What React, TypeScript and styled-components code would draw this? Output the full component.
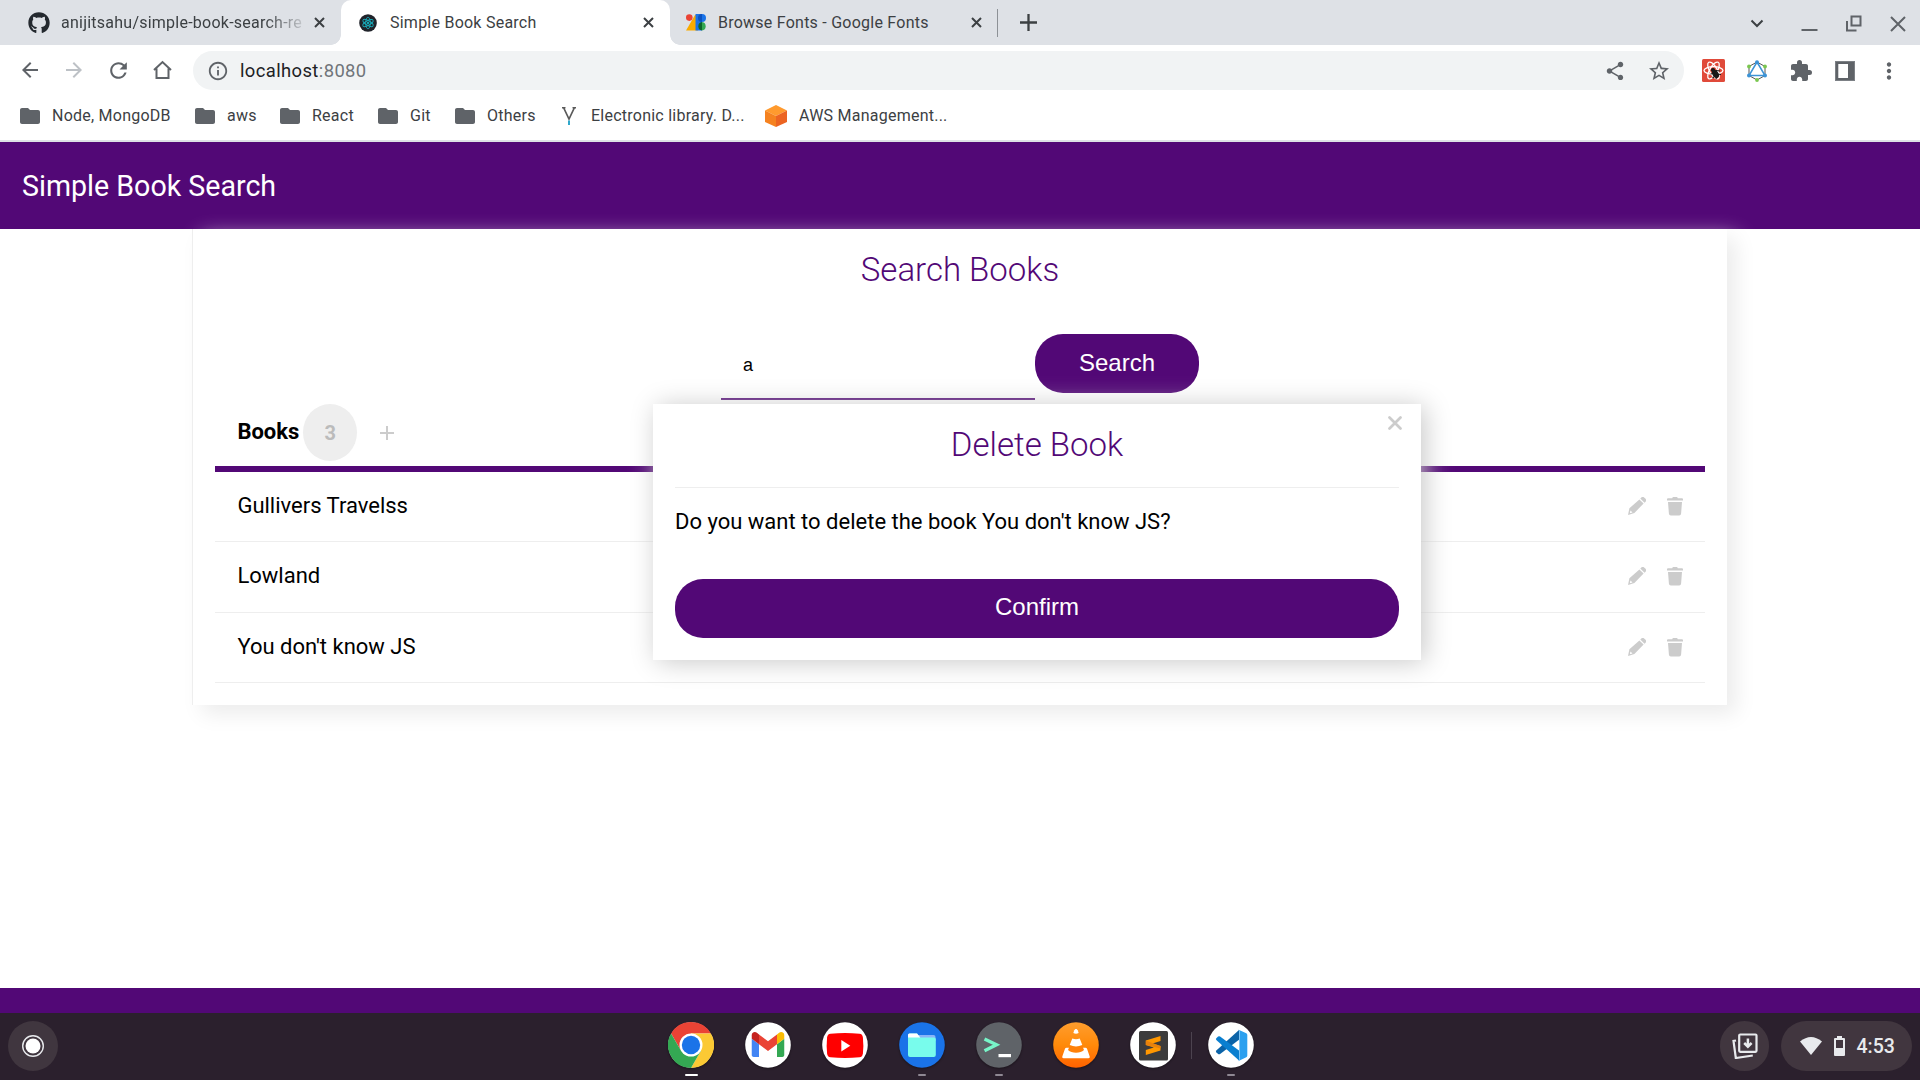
import React from "react";
import styled, { createGlobalStyle } from "styled-components";
import { FaGithub } from "react-icons/fa";
import {
  MdArrowBack, MdArrowForward, MdRefresh, MdInfoOutline, MdShare,
  MdStarBorder, MdExtension, MdMoreVert, MdFolder,
} from "react-icons/md";

const purple = "#520876";

const Global = createGlobalStyle`
  * { box-sizing: border-box; }
  html, body { margin: 0; padding: 0; background: #fff; overflow: hidden; }
  body { font-family: Roboto, sans-serif; color: #000; }
  button, input { font-family: "Liberation Sans", Arial, sans-serif; }
  svg { display: block; flex: none; }
`;

const Screen = styled.div`
  width: 1920px; height: 1080px; display: flex; flex-direction: column; overflow: hidden; background: #fff;
`;

/* Browser frame */
const TabStrip = styled.div`
  height: 45px; flex: none; background: #dee1e6; display: flex; color: #3c4043;
`;
const Tab = styled.div<{ $w: number; $left: number; $right: number; $gap: number; $active?: boolean }>`
  width: ${p => p.$w}px; height: 45px; flex: none; display: flex; align-items: center; position: relative;
  padding: 0 ${p => p.$right}px 0 ${p => p.$left}px; gap: ${p => p.$gap}px;
  font-size: 16px; letter-spacing: 0.24px;
  background: ${p => (p.$active ? "#fff" : "transparent")};
  border-radius: ${p => (p.$active ? "10px 10px 0 0" : "0")};
  ${p => p.$active && `
    &::before, &::after { content: ""; position: absolute; bottom: 0; width: 10px; height: 10px; }
    &::before { left: -10px; background: radial-gradient(circle at 0 0, transparent 9.5px, #fff 10px); }
    &::after { right: -10px; background: radial-gradient(circle at 100% 0, transparent 9.5px, #fff 10px); }
  `}
`;
const TabTitle = styled.span<{ $fade?: boolean }>`
  flex: 1; min-width: 0; white-space: nowrap; line-height: 24px;
  ${p => p.$fade && "mask-image: linear-gradient(90deg, #000 84%, transparent 103%);"}
`;
const TabDivider = styled.div`
  width: 1px; height: 28px; margin: 9px 0 0 7px; background: #8d9196; flex: none;
`;
const NewTab = styled.div`
  width: 60px; height: 45px; display: grid; place-items: center;
`;
const WindowControls = styled.div`
  margin-left: auto; display: flex; align-items: center; gap: 23px; padding-right: 11px; color: #5f6368;
  > svg:first-child { margin-right: 6px; }
`;
const Toolbar = styled.div`
  height: 51px; flex: none; display: flex; align-items: center; color: #5f6368;
`;
const NavButtons = styled.div`
  width: 193px; padding-left: 18px; display: flex; gap: 20px; flex: none;
`;
const Omnibox = styled.div`
  width: 1491px; height: 39px; border-radius: 20px; background: #f1f3f4; display: flex; align-items: center;
  padding: 0 13px 0 14px; font-size: 18.4px; letter-spacing: 0.4px; color: #202124;
`;
const Address = styled.span`
  margin-left: 11px; flex: 1; line-height: 28px;
  span { color: #70757a; }
`;
const OmniActions = styled.div`display: flex; align-items: center; gap: 21px;`;
const Extensions = styled.div`
  display: grid; grid-template-columns: repeat(5, 44px); place-items: center; padding-left: 7px;
`;
const BookmarkBar = styled.div`
  height: 46px; flex: none; display: flex; align-items: flex-start; padding: 7px 0 0 20px; border-bottom: 2px solid #dee1e6;
  color: #3c4043;
`;
const Bookmark = styled.div<{ $w: number; $icon: number }>`
  width: ${p => p.$w}px; height: 25px; display: grid; grid-template-columns: ${p => p.$icon}px 1fr; column-gap: 12px;
  align-items: center; font-size: 16px; letter-spacing: 0.24px; line-height: 24px; white-space: nowrap;
  > svg { justify-self: center; }
  > span { padding-top: 1px; }
`;

/* Book search page */
const Page = styled.div`
  flex: 1; position: relative; display: flex; flex-direction: column; background: #fff;
`;
const Header = styled.header`
  height: 87px; flex: none; background: ${purple}; color: #fff; padding: 25px 22px 0; font-size: 28.6px; line-height: 38px;
`;
const Card = styled.main`
  position: relative; width: 1534px; height: 476px; margin-left: 193px; padding: 21px 22px 0; background: #fff;
  box-shadow: -1px 0 0 #eee, 9px 9px 20px #ececec; display: flex; flex-direction: column;
`;
const Title = styled.h1`
  margin: 0; font-weight: 300; font-size: 33px; line-height: 40px; color: ${purple}; text-align: center;
`;
const SearchForm = styled.form`
  display: flex; margin: 44px 0 0 506px; align-items: flex-start;
`;
const SearchInput = styled.input`
  width: 314px; height: 66px; border: 0; border-bottom: 2px solid ${purple}; outline: 0; background: transparent;
  padding: 0 22px 2px; font-size: 18px; color: #000;
`;
const PrimaryButton = styled.button<{ $w: string; $lift: number }>`
  width: ${p => p.$w}; height: 59px; border: 0; border-radius: 28px; background: ${purple}; color: #fff; font-size: 24px;
  padding: 0 0 ${p => p.$lift}px;
`;
const ListHead = styled.div`
  height: 72px; padding: 4px 22px 5px; display: flex; align-items: center; border-bottom: 6px solid ${purple};
  font-size: 22px; font-weight: 700;
`;
const ListName = styled.span`padding: 0 0 2px 0.4px;`;
const Count = styled.span`
  width: 54px; height: 57px; margin: 0 23px 0 4px; border-radius: 50%; background: #eee; color: #bbb; font-size: 20px; display: grid; place-items: center;
`;
const Row = styled.div<{ $h: number }>`
  height: ${p => p.$h}px; padding: 0 22px 0 22.4px; display: flex; align-items: center; border-bottom: 1px solid #eee; font-size: 22px;
  line-height: 30px;
  > span { padding-bottom: 2px; }
`;
const RowActions = styled.div`
  margin-left: auto; display: flex; gap: 21px; padding-bottom: 1px;
`;
const Modal = styled.section`
  position: absolute; left: 653px; top: 262px; width: 768px; height: 256px; padding: 21px 22px 22px; background: #fff;
  box-shadow: 4px 2px 25px #c8c8c8; display: flex; flex-direction: column;
`;
const ModalHead = styled.div`
  height: 63px; border-bottom: 1px solid #eee;
`;
const ModalText = styled.p`
  margin: 18px 0 42px; font-size: 22px; line-height: 31px;
`;
const CloseIcon = styled.svg`
  position: absolute; right: 19px; top: 12px; width: 14px; height: 14px;
`;
const Footer = styled.footer`
  height: 25px; margin-top: auto; background: ${purple};
`;

/* Shelf */
const Shelf = styled.div`
  height: 67px; flex: none; background: #2b202d; display: grid; grid-template-columns: 668px 1fr 208px; align-items: start; color: #e8eaed;
`;
const Launcher = styled.div`
  width: 50px; height: 50px; margin: 8px 0 0 8px; border-radius: 50%; background: #40363f; display: grid; place-items: center;
`;
const Apps = styled.div`
  display: flex; gap: 31px; padding-top: 9px;
`;
const ShelfApp = styled.div`
  width: 46px; display: flex; flex-direction: column; align-items: center; gap: 6px;
  > svg { filter: drop-shadow(0 1px 1px rgba(0,0,0,.4)); }
`;
const Indicator = styled.i<{ $on?: boolean }>`
  width: ${p => (p.$on ? 13 : 8)}px; height: 2px; border-radius: 1px; background: ${p => (p.$on ? "#fff" : "#8f8893")};
`;
const ShelfDivider = styled.div`
  width: 1px; height: 27px; margin: 10px -15px 0 -16px; background: #4c434f;
`;
const Status = styled.div`
  display: flex; gap: 12px; padding: 8px 8px 0 8px;
`;
const Tote = styled.div`
  width: 49px; height: 50px; border-radius: 25px; background: #41363f; display: grid; place-items: center;
`;
const Tray = styled.div`
  width: 131px; height: 50px; border-radius: 25px; background: #41363f; display: flex; align-items: center; gap: 12px; padding-left: 18.500px;
  font-size: 19.5px; font-weight: 500; white-space: nowrap;
`;

const TabClose = () => (
  <svg width="11" height="11" viewBox="0 0 11 11"><path d="M1 1L10 10M10 1L1 10" stroke="#3c4043" strokeWidth="2" /></svg>
);
const HomeIcon = () => (
  <svg width="23" height="24" viewBox="0 0 23 24"><path d="M3 12L11.500 4l8.500 8M5.500 10.500V20h12V10.500" fill="none" stroke="#5f6368" strokeWidth="2" /></svg>
);
const ReactFavicon = () => (
  <svg width="18" height="18" viewBox="0 0 18 18">
    <circle cx="9" cy="9" r="8.8" fill="#20232a" />
    <g fill="none" stroke="#18a7b5" strokeWidth="0.9">
      {[0, 60, 120].map(a => <ellipse key={a} cx="9" cy="9" rx="5.8" ry="2.3" transform={`rotate(${a + 30} 9 9)`} />)}
    </g>
    <circle cx="9" cy="9" r="1.2" fill="#18a7b5" />
  </svg>
);
const FontsFavicon = () => (
  <svg width="21" height="17" viewBox="0 0 21 17">
    <path d="M0 16.5L9 1h3v15.5z" fill="#f9ab00" /><path d="M9.5 0H16v16.5H9.5z" fill="#1a73e8" />
    <circle cx="3.3" cy="3.6" r="3.3" fill="#ea4335" />
    <path d="M16 0a4 4 0 0 1 0 8z" fill="#1a73e8" /><path d="M16 0a4 4 0 0 0 0 8z" fill="#0d52bf" />
    <path d="M16 8a4.3 4.3 0 0 1 0 8.5z" fill="#34a853" /><path d="M16 8a4.3 4.3 0 0 0 0 8.5z" fill="#0d652d" />
  </svg>
);
const Pencil = () => (
  <svg width="18" height="18" viewBox="0 0 18 18" fill="#ccc">
    <path d="M12.3 1.5l.8-.8a2.3 2.3 0 0 1 3.3 0l.9.9a2.3 2.3 0 0 1 0 3.300l-.8.800z" />
    <path fillRule="evenodd" d="M11.400 2.400l4.200 4.200L6.400 15.900 0 18l1.400-6.800zM2.500 13.600l-.7 2.700 2.700-.8z" />
  </svg>
);
const Trash = () => (
  <svg width="16" height="19" viewBox="0 0 16 19" fill="#ccc">
    <path d="M1 1.200h4.200C5.500.2 6 0 6.700 0h2.600c.7 0 1.200.2 1.500 1.200H15q1 0 1 1v1.400H0V2.200q0-1 1-1zM1 5h14l-.9 11.600q-.1 1.900-1.900 1.900H3.800q-1.800 0-1.900-1.900z" />
  </svg>
);

const bookmarks: { label: string; w: number; icon?: "y" | "aws" }[] = [
  { label: "Node, MongoDB", w: 175 }, { label: "aws", w: 85 }, { label: "React", w: 98 }, { label: "Git", w: 77 },
  { label: "Others", w: 104 }, { label: "Electronic library. D...", w: 206, icon: "y" }, { label: "AWS Management...", w: 200, icon: "aws" },
];
const books = [{ name: "Gullivers Travelss", h: 70 }, { name: "Lowland", h: 71 }, { name: "You don't know JS", h: 70 }];

const BookmarkIcon = ({ kind }: { kind?: "y" | "aws" }) => {
  if (kind === "y") return (
    <svg width="14" height="18" viewBox="0 0 14 18"><path d="M1.500.5L7 12L12.500.5M0 .7h3.500M10.500.7H14" stroke="#5a5a5a" strokeWidth="1.700" fill="none" /><path d="M7 13.500v4.500" stroke="#2fa8cc" strokeWidth="2" /></svg>
  );
  if (kind === "aws") return (
    <svg width="22" height="22" viewBox="0 0 22 22"><path d="M11 0l11 5.500-11 5.500L0 5.500z" fill="#ff9a2e" /><path d="M0 5.500L11 11v11L0 17z" fill="#f58220" /><path d="M22 5.500L11 11v11l11-5z" fill="#ec6422" /></svg>
  );
  return <MdFolder size={24} color="#5f6368" />;
};

const ReactDevIcon = () => (
  <svg width="23" height="23" viewBox="0 0 23 23">
    <rect width="23" height="23" rx="1.500" fill="#e04a3a" />
    <g fill="none" stroke="#fff" strokeWidth="1.300">
      {[0, 60, 120].map(a => <ellipse key={a} cx="11.500" cy="11.500" rx="9.500" ry="3.800" transform={`rotate(${a} 11.500 11.500)`} />)}
    </g>
    <g stroke="#181818" strokeWidth="1.200"><ellipse cx="13.500" cy="15" rx="2.300" ry="3.800" transform="rotate(-35 13.500 15)" fill="#181818" /><circle cx="11" cy="11" r="1.500" fill="#181818" /><path d="M8.500 15l5-1M14 11.500l4 .5M10.500 19l4-3M15 15l4 .5M14 20l1-4" fill="none" /></g>
  </svg>
);
const ApolloIcon = () => (
  <svg width="20" height="22" viewBox="0 0 20 22">
    <path d="M10 2l8 4.500v9L10 20l-8-4.500v-9z" fill="none" stroke="#555" strokeWidth="1" />
    <path d="M10 2l8 13.500H2z" fill="none" stroke="#3b93d6" strokeWidth="1.500" />
    <g fill="#3b93d6"><circle cx="10" cy="2.200" r="2" /><circle cx="18" cy="15.500" r="2" /><circle cx="2" cy="15.500" r="2" /></g>
    <g fill="#7ac74f"><circle cx="18" cy="6.500" r="1.900" /><circle cx="2" cy="6.500" r="1.900" /><circle cx="10" cy="20" r="1.900" /></g>
  </svg>
);
const SidePanelIcon = () => (
  <svg width="20" height="20" viewBox="0 0 20 20">
    <rect width="20" height="20" fill="#7c8085" /><rect x="1" y="1" width="18" height="18" fill="#5f6368" />
    <rect x="3.300" y="3" width="9.700" height="14" fill="#fff" />
  </svg>
);

const Disc = ({ bg, children }: { bg: string; children: React.ReactNode }) => (
  <svg width="46" height="46" viewBox="0 0 46 46"><circle cx="23" cy="23" r="22.800" fill={bg} />{children}</svg>
);
const ChromeLogo = () => (
  <Disc bg="#fff">
    <path d="M3.080 11.500A23 23 0 0 1 42.920 11.500H23L13.040 28.750z" fill="#ea4335" />
    <path d="M42.920 11.500A23 23 0 0 1 23 46L32.960 28.750L23 11.500z" fill="#fbc934" />
    <path d="M23 46A23 23 0 0 1 3.080 11.500L13.040 28.750H32.960z" fill="#34a853" />
    <circle cx="23" cy="23" r="11.500" fill="#fff" /><circle cx="23" cy="23" r="9.200" fill="#1a73e8" />
  </Disc>
);
const GmailLogo = () => (
  <Disc bg="#fff">
    <svg x="6.500" y="10" width="33" height="25" viewBox="52 42 88 66">
      <path fill="#4285f4" d="M58 108h14V74L52 59v43c0 3.320 2.690 6 6 6" /><path fill="#34a853" d="M120 108h14c3.320 0 6-2.690 6-6V59l-20 15" />
      <path fill="#fbbc04" d="M120 48v26l20-15v-8c0-7.420-8.470-11.650-14.400-7.200" /><path fill="#ea4335" d="M72 74V48l24 18 24-18v26L96 92" />
      <path fill="#c5221f" d="M52 51v8l20 15V48l-5.600-4.200c-5.940-4.450-14.400-.22-14.400 7.200" />
    </svg>
  </Disc>
);
const YoutubeLogo = () => (
  <Disc bg="#fff">
    <path d="M8.500 11.700Q23 10.300 37.500 11.700Q40.500 12 40.900 15.500Q41.800 23.500 40.900 31.500Q40.500 35 37.500 35.300Q23 36.700 8.500 35.300Q5.500 35 5.100 31.500Q4.200 23.500 5.100 15.500Q5.500 12 8.500 11.700z" fill="#f00" />
    <path d="M19.300 18v11.500l9-5.750z" fill="#fff" />
  </Disc>
);
const FilesLogo = () => (
  <Disc bg="#1a73e8">
    <path d="M18 13h16.500q2 0 2 2v4H18z" fill="#8ab4f8" />
    <path d="M9 13q0-1.500 1.500-1.500h7.500l3 4h14q1.800 0 1.800 1.800V33q0 2-2 2H11q-2 0-2-2z" fill="#78fcec" />
    <path d="M9 13q0-1.500 1.500-1.500h7.500l3.300 4H9z" fill="#fff" />
  </Disc>
);
const TerminalLogo = () => (
  <Disc bg="#5f6368">
    <path d="M8.500 17L20.500 22.800L8.500 28.800" fill="none" stroke="#78f5c8" strokeWidth="3.400" /><rect x="22.500" y="32" width="12.500" height="3.200" fill="#fff" />
  </Disc>
);
const VlcLogo = () => (
  <Disc bg="url(#vlcg)">
    <defs><linearGradient id="vlcg" x1="0" y1="0" x2="0" y2="1"><stop offset="0" stopColor="#ff9d2e" /><stop offset=".5" stopColor="#ff8a0a" /><stop offset="1" stopColor="#ff6200" /></linearGradient></defs>
    <path d="M13.500 25.800h19q1.200 0 1.600 1.200l2.600 7.500q.5 1.700-1.200 1.700h-25q-1.700 0-1.200-1.700l2.600-7.500q.4-1.200 1.600-1.200z" fill="#fff" />
    <path d="M17.500 22l-2.500 6q3 2.800 8 2.800t8-2.800l-2.500-6z" fill="#ff8108" />
    <path d="M19.300 16.500q3.700 1.600 7.400 0l2.600 6.500q-6.300 2.800-12.600 0z" fill="#fff" />
    <path d="M21.300 8.300q1.700-2.600 3.400 0l1 2.800q-2.700 1.200-5.400 0z" fill="#fff" />
  </Disc>
);
const SublimeLogo = () => (
  <Disc bg="#fff">
    <rect x="9" y="9" width="29" height="29.500" rx="1.500" fill="#3c3c3c" />
    <path d="M15.800 18.500L30.500 14v5l-8 2.600 8 2.400v4.600L15.800 33v-5l8-2.400-8-2.500z" fill="#ff9800" />
    <path d="M15.800 18.500l14.700 5.500v2.500l-14.700-3.400z" fill="#e8820c" />
  </Disc>
);
const VscodeLogo = () => (
  <Disc bg="#fff">
    <path d="M31 8L8.300 28.500q-.8 1 0 1.800l1.800 1.600q1 .7 2 0L31 17.800z" fill="#0b63a8" />
    <path d="M31 38.500L8.300 18q-.8-1 0-1.800l1.800-1.600q1-.7 2 0L31 28.500z" fill="#0a7fd0" />
    <path d="M30 7.500l8.300 3.800q1 .5 1 1.700v20.500q0 1.200-1 1.700L30 39.200q1.400-.6 1.400-2.200V9.500q0-1.400-1.400-2z" fill="#2ca0ef" />
  </Disc>
);

const shelfApps: { logo: React.ReactNode; state?: "active" | "open"; split?: boolean }[] = [
  { logo: <ChromeLogo />, state: "active" }, { logo: <GmailLogo /> }, { logo: <YoutubeLogo /> },
  { logo: <FilesLogo />, state: "open" }, { logo: <TerminalLogo />, state: "open" }, { logo: <VlcLogo /> },
  { logo: <SublimeLogo /> }, { logo: <VscodeLogo />, state: "open", split: true },
];

export default function App() {
  return (
    <Screen>
      <Global />
      <TabStrip>
        <Tab $w={341} $left={28} $right={16} $gap={11}>
          <FaGithub size={22} color="#24292f" />
          <TabTitle $fade>anijitsahu/simple-book-search-re</TabTitle>
          <TabClose />
        </Tab>
        <Tab $w={329} $left={18} $right={16} $gap={13} $active>
          <ReactFavicon /><TabTitle>Simple Book Search</TabTitle><TabClose />
        </Tab>
        <Tab $w={320} $left={16} $right={8} $gap={11}>
          <FontsFavicon /><TabTitle>Browse Fonts - Google Fonts</TabTitle><TabClose />
        </Tab>
        <TabDivider />
        <NewTab><svg width="17" height="17" viewBox="0 0 17 17"><path d="M8.500 0v17M0 8.500h17" stroke="#3c4043" strokeWidth="2.300" /></svg></NewTab>
        <WindowControls>
          <svg width="22" height="22" viewBox="0 0 22 22"><path d="M5.500 8.500l5.500 5.500 5.500-5.500" fill="none" stroke="#3c4043" strokeWidth="2" /></svg>
          <svg width="22" height="22" viewBox="0 0 22 22"><path d="M4.500 18h16" stroke="#5f6368" strokeWidth="2" /></svg>
          <svg width="22" height="22" viewBox="0 0 22 22"><path d="M9.500 4.500h9v9h-9zM5 9v9.500h9.500" fill="none" stroke="#5f6368" strokeWidth="2" /></svg>
          <svg width="22" height="22" viewBox="0 0 22 22"><path d="M4 5l14 14M18 5l-14 14" stroke="#5f6368" strokeWidth="2" /></svg>
        </WindowControls>
      </TabStrip>
      <Toolbar>
        <NavButtons>
          <MdArrowBack size={24} /><MdArrowForward size={24} color="#bdc1c6" /><MdRefresh size={25} /><HomeIcon />
        </NavButtons>
        <Omnibox>
          <MdInfoOutline size={22} color="#5f6368" />
          <Address>localhost<span>:8080</span></Address>
          <OmniActions><MdShare size={22} color="#5f6368" /><MdStarBorder size={24} color="#5f6368" /></OmniActions>
        </Omnibox>
        <Extensions>
          <ReactDevIcon />
          <ApolloIcon />
          <MdExtension size={24} />
          <SidePanelIcon />
          <MdMoreVert size={26} />
        </Extensions>
      </Toolbar>
      <BookmarkBar>
        {bookmarks.map(b => (
          <Bookmark key={b.label} $w={b.w} $icon={b.icon === "aws" ? 22 : 20}><BookmarkIcon kind={b.icon} /><span>{b.label}</span></Bookmark>
        ))}
      </BookmarkBar>
      <Page>
        <Header>Simple Book Search</Header>
        <Card>
          <Title>Search Books</Title>
          <SearchForm>
            <SearchInput defaultValue="a" />
            <PrimaryButton type="button" $w="164px" $lift={1}>Search</PrimaryButton>
          </SearchForm>
          <ListHead>
            <ListName>Books</ListName><Count>3</Count>
            <svg width="14" height="14" viewBox="0 0 14 14"><path d="M7 0v14M0 7h14" stroke="#ccc" strokeWidth="2" /></svg>
          </ListHead>
          {books.map(b => (
            <Row key={b.name} $h={b.h}><span>{b.name}</span><RowActions><Pencil /><Trash /></RowActions></Row>
          ))}
        </Card>
        <Modal>
          <CloseIcon viewBox="0 0 14 14"><path d="M1.500 1.500l11 11M12.500 1.500l-11 11" stroke="#ccc" strokeWidth="2.700" strokeLinecap="round" /></CloseIcon>
          <ModalHead><Title>Delete Book</Title></ModalHead>
          <ModalText>Do you want to delete the book You don't know JS?</ModalText>
          <PrimaryButton $w="100%" $lift={3}>Confirm</PrimaryButton>
        </Modal>
        <Footer />
      </Page>
      <Shelf>
        <Launcher>
          <svg width="24" height="24" viewBox="0 0 24 24"><circle cx="12" cy="12" r="10.300" fill="none" stroke="#e8eaed" strokeWidth="1.400" /><circle cx="12" cy="12" r="7.500" fill="#fff" /></svg>
        </Launcher>
        <Apps>
          {shelfApps.map((a, i) => (
            <React.Fragment key={i}>
              {a.split && <ShelfDivider />}
              <ShelfApp>{a.logo}{a.state && <Indicator $on={a.state === "active"} />}</ShelfApp>
            </React.Fragment>
          ))}
        </Apps>
        <Status>
          <Tote>
            <svg width="26" height="26" viewBox="0 0 26 26" fill="none" stroke="#e8eaed" strokeWidth="2.200"><rect x="7.200" y="1.500" width="17.300" height="17.300" rx="1" /><path d="M4 7.500L1.500 8l2.300 17 17-2.500" /><path d="M15.900 5.500v8M12.200 10l3.700 3.700L19.600 10" strokeWidth="2.500" /></svg>
          </Tote>
          <Tray>
            <svg width="22" height="18" viewBox="0 0 22 18"><path d="M0 4.500Q11-4.500 22 4.500L11 18z" fill="#e8eaed" /></svg>
            <svg width="11" height="20" viewBox="0 0 11 20"><path fillRule="evenodd" d="M3 0h5v2h2q1 0 1 1v16q0 1-1 1H1q-1 0-1-1V3q0-1 1-1h2zM2 4v8h7V4z" fill="#e8eaed" /></svg>
            <span>4:53</span>
          </Tray>
        </Status>
      </Shelf>
    </Screen>
  );
}
